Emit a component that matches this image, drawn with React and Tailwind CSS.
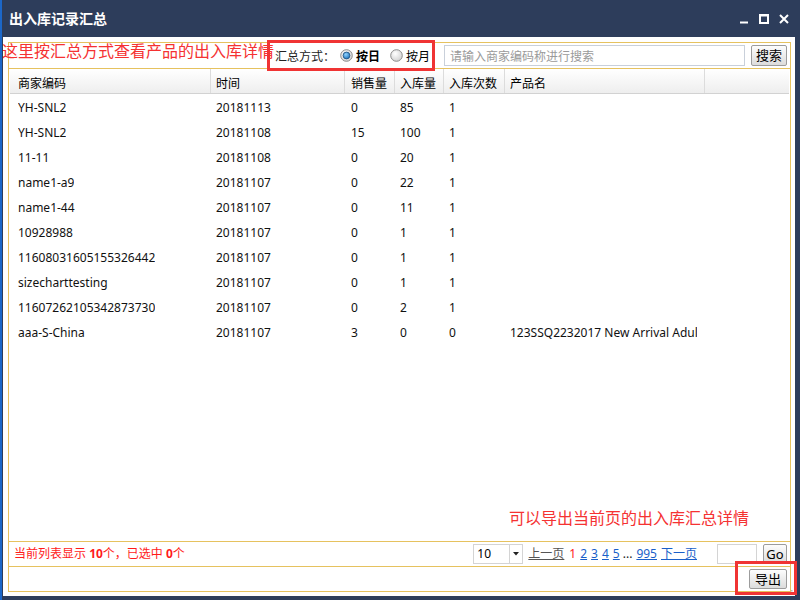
import React from "react";

const rows = [
  ["YH-SNL2", "20181113", "0", "85", "1", ""],
  ["YH-SNL2", "20181108", "15", "100", "1", ""],
  ["11-11", "20181108", "0", "20", "1", ""],
  ["name1-a9", "20181107", "0", "22", "1", ""],
  ["name1-44", "20181107", "0", "11", "1", ""],
  ["10928988", "20181107", "0", "1", "1", ""],
  ["11608031605155326442", "20181107", "0", "1", "1", ""],
  ["sizecharttesting", "20181107", "0", "1", "1", ""],
  ["11607262105342873730", "20181107", "0", "2", "1", ""],
  ["aaa-S-China", "20181107", "3", "0", "0", "123SSQ2232017 New Arrival Adult Women Shoes"],
];

const cols = [
  { w: "w-[201px]", pl: "pl-[8px]" },
  { w: "w-[134px]", pl: "pl-[5px]" },
  { w: "w-[50px]", pl: "pl-[6px]" },
  { w: "w-[49px]", pl: "pl-[5px]" },
  { w: "w-[61px]", pl: "pl-[5px]" },
  { w: "w-[200px]", pl: "pl-[5px]" },
];

const headers = ["商家编码", "时间", "销售量", "入库量", "入库次数", "产品名"];

function Radio({ checked }) {
  return (
    <svg width="13" height="13" viewBox="0 0 13 13">
      <defs>
        <radialGradient id={checked ? "rgc" : "rgu"} cx="40%" cy="35%" r="70%">
          <stop offset="0" stopColor="#ffffff" />
          <stop offset="1" stopColor="#cfcfcf" />
        </radialGradient>
        <radialGradient id="blue" cx="40%" cy="35%" r="70%">
          <stop offset="0" stopColor="#8fd3ff" />
          <stop offset="1" stopColor="#1a6fb8" />
        </radialGradient>
      </defs>
      <circle cx="6.5" cy="6.5" r="5.8" fill={`url(#${checked ? "rgc" : "rgu"})`} stroke="#8c8c8c" strokeWidth="1" />
      {checked && <circle cx="6.5" cy="6.5" r="3.4" fill="url(#blue)" stroke="#1c4f7e" strokeWidth="0.8" />}
    </svg>
  );
}

function Btn({ children, className = "" }) {
  return (
    <div
      className={`flex items-center justify-center border border-[#9c9c9c] rounded-[2px] bg-gradient-to-b from-[#fdfdfd] to-[#dcdcdc] text-[13px] text-black leading-none ${className}`}
    >
      {children}
    </div>
  );
}

export default function App() {
  return (
    <div
      className="relative w-[800px] h-[600px] bg-[#2d3d5b] border-l-2 border-[#1c67c8] flex flex-col overflow-hidden"
      style={{ fontFamily: '"Noto Sans","Noto Sans CJK SC",sans-serif' }}
    >
      {/* title bar */}
      <div className="h-[37px] flex items-center justify-between pl-[7px] pr-[11px] shrink-0">
        <div className="text-white font-bold text-[14px]" style={{ fontFamily: '"Noto Sans CJK SC",sans-serif' }}>
          出入库记录汇总
        </div>
        <div className="flex items-center gap-[10px] pt-[1px]">
          <svg width="10" height="10" viewBox="0 0 10 10">
            <rect x="1" y="7.5" width="8" height="2" fill="#fff" />
          </svg>
          <svg width="10" height="10" viewBox="0 0 10 10">
            <rect x="1" y="1" width="8" height="8" fill="none" stroke="#fff" strokeWidth="2" />
            <rect x="1" y="0" width="8" height="2.5" fill="#fff" />
          </svg>
          <svg width="10" height="10" viewBox="0 0 10 10">
            <path d="M1 1 L9 9 M9 1 L1 9" stroke="#fff" strokeWidth="2" />
          </svg>
        </div>
      </div>

      {/* body */}
      <div className="flex-1 ml-[1px] mr-[5px] mb-[4px] bg-white pt-[5px] pb-[4px] pl-[5px] pr-[4px] flex">
        <div className="flex-1 border border-[#e6c25f] flex flex-col text-[12px] text-[#111]">
          {/* toolbar */}
          <div className="h-[26px] shrink-0 border-b border-[#e6c25f] flex items-center justify-end pr-[3px]">
            <div className="flex items-center text-[12px] text-[#222]" style={{ fontFamily: '"Noto Sans CJK SC",sans-serif' }}>
              <span>汇总方式：</span>
              <span className="ml-[5px] flex items-center"><Radio checked /></span>
              <span className="ml-[3px] font-bold text-black">按日</span>
              <span className="ml-[10px] flex items-center"><Radio /></span>
              <span className="ml-[3px] text-black">按月</span>
            </div>
            <div className="ml-[14px] w-[301px] h-[21px] border border-[#c9d0da] flex items-center pl-[5px] text-[#9a9a9a]" style={{ fontFamily: '"Noto Sans CJK SC",sans-serif' }}>
              请输入商家编码称进行搜索
            </div>
            <Btn className="ml-[6px] w-[36px] h-[21px]">搜索</Btn>
          </div>

          {/* grid */}
          <div className="flex-1 px-[1px] flex flex-col">
            <div className="h-[25px] shrink-0 flex bg-gradient-to-b from-white to-[#eeeeee] border-b border-[#d2d2d2]">
              {headers.map((h, i) => (
                <div key={i} className={`${cols[i].w} ${cols[i].pl} pt-[4px] flex items-center border-r border-[#dcdcdc] text-black`} style={{ fontFamily: '"Noto Sans CJK SC",sans-serif' }}>
                  {h}
                </div>
              ))}
              <div className="flex-1" />
            </div>
            {rows.map((r, ri) => (
              <div key={ri} className="h-[25px] flex">
                {r.map((c, ci) => (
                  <div key={ci} className={`${cols[ci].w} ${cols[ci].pl} ${ci === 5 ? "pr-[8px]" : ""} pt-[3px] flex items-center text-[#111]`}>
                    <div className="overflow-hidden whitespace-nowrap">{c}</div>
                  </div>
                ))}
              </div>
            ))}
          </div>

          {/* pager */}
          <div className="h-[26px] shrink-0 border-t border-b border-[#e6c25f] flex items-center pl-[5px] pr-[3px]" style={{ fontFamily: '"Noto Sans","Noto Sans CJK SC",sans-serif' }}>
            <div className="text-[#ff1a1a]">
              当前列表显示 <b>10</b>个，已选中 <b>0</b>个
            </div>
            <div className="flex-1" />
            <div className="w-[50px] h-[20px] border border-[#d4d4d4] flex items-center">
              <span className="flex-1 pl-[3px] text-black">10</span>
              <span className="w-[13px] h-full border-l border-[#d4d4d4] flex items-center justify-center">
                <svg width="6" height="4" viewBox="0 0 6 4"><path d="M0 0 H6 L3 3.5 Z" fill="#222" /></svg>
              </span>
            </div>
            <span className="ml-[5px] underline text-[#555]">上一页</span>
            <span className="ml-[5px] text-[#ff1a1a]">1</span>
            <span className="ml-[4px] underline text-[#1a5fc9]">2</span>
            <span className="ml-[4px] underline text-[#1a5fc9]">3</span>
            <span className="ml-[4px] underline text-[#1a5fc9]">4</span>
            <span className="ml-[4px] underline text-[#1a5fc9]">5</span>
            <span className="ml-[3px] text-[#222]">...</span>
            <span className="ml-[4px] underline text-[#1a5fc9]">995</span>
            <span className="ml-[4px] underline text-[#1a5fc9]">下一页</span>
            <div className="ml-[20px] w-[40px] h-[20px] border border-[#d4d4d4]" />
            <Btn className="ml-[6px] w-[24px] h-[20px]">Go</Btn>
          </div>

          {/* bottom */}
          <div className="h-[24px] shrink-0 flex items-center justify-end pr-[3px]">
            <Btn className="w-[38px] h-[20px]" >导出</Btn>
          </div>
        </div>
      </div>

      {/* resize grip */}
      <svg className="absolute right-[4px] bottom-[5px]" width="8" height="8" viewBox="0 0 8 8">
        <rect x="6" y="0" width="1.5" height="1.5" fill="#b9b9b9" />
        <rect x="3" y="3" width="1.5" height="1.5" fill="#b9b9b9" />
        <rect x="6" y="3" width="1.5" height="1.5" fill="#b9b9b9" />
        <rect x="0" y="6" width="1.5" height="1.5" fill="#b9b9b9" />
        <rect x="3" y="6" width="1.5" height="1.5" fill="#b9b9b9" />
        <rect x="6" y="6" width="1.5" height="1.5" fill="#b9b9b9" />
      </svg>

      {/* annotations */}
      <div className="absolute left-[0px] top-[39px] text-[16px] leading-[22px] text-[#f53232] whitespace-nowrap" style={{ fontFamily: '"Noto Sans CJK SC",sans-serif' }}>
        这里按汇总方式查看产品的出入库详情
      </div>
      <div className="absolute left-[265px] top-[40px] w-[168px] h-[31px] border-[3px] border-[#f03434]" />
      <div className="absolute left-[507px] top-[506px] text-[16px] leading-[22px] text-[#f53232] whitespace-nowrap" style={{ fontFamily: '"Noto Sans CJK SC",sans-serif' }}>
        可以导出当前页的出入库汇总详情
      </div>
      <div className="absolute left-[733px] top-[561px] w-[62px] h-[34px] border-[3px] border-[#f03434]" />
    </div>
  );
}
